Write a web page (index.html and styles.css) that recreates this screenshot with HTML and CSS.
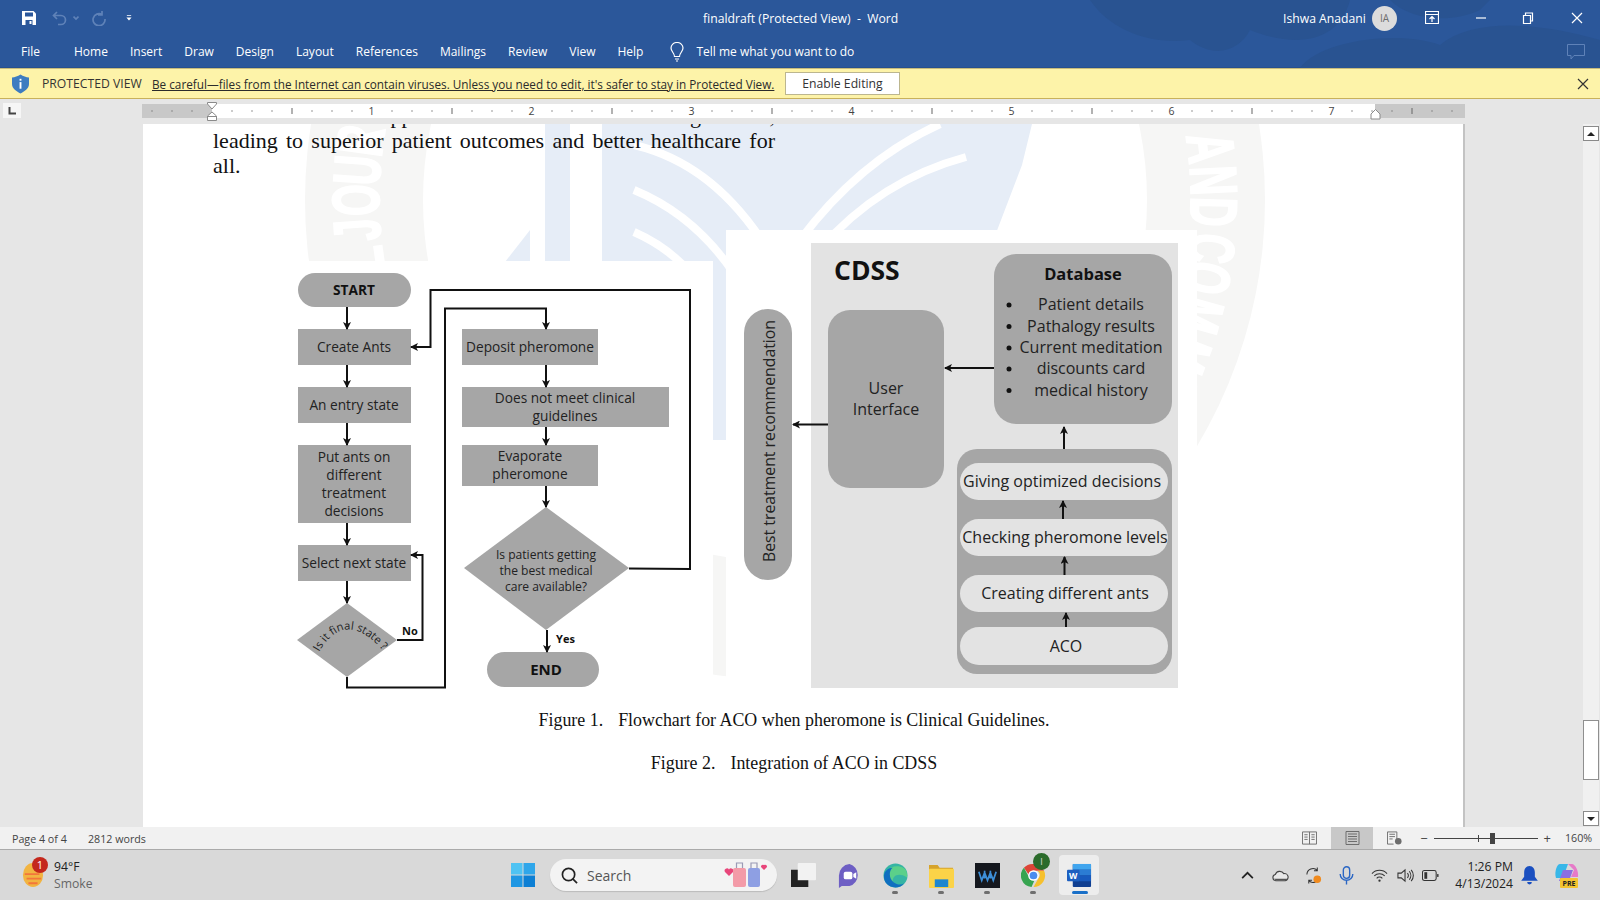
FILE: index.html
```html
<!DOCTYPE html>
<html lang="en">
<head>
<meta charset="utf-8">
<title>finaldraft (Protected View) - Word</title>
<link rel="stylesheet" href="styles.css">
</head>
<body>
<header class="ribbon">
  <svg class="ribbon-art" viewBox="0 0 1600 68" aria-hidden="true">
    <path d="M1090 0 C1110 30 1150 45 1190 40 C1215 60 1240 50 1250 30 C1300 50 1340 40 1350 0Z"/>
    <path d="M1300 68 C1320 40 1400 30 1440 45 C1470 20 1530 20 1600 40 V68Z"/>
    <path d="M1390 0 C1410 20 1450 24 1480 10 L1490 0Z"/>
  </svg>
  <div class="titlebar">
    <div class="qat">
      <svg class="ic14" viewBox="0 0 14 14"><path class="fw" d="M0 0H11.5L14 2.5V14H0Z"/><path class="fb" d="M3 1.5H11V5.5H3Z"/><path class="fb" d="M3.5 9H10.5V14H3.5Z"/><path class="fw" d="M7.5 10H9.5V13H7.5Z"/></svg>
      <svg class="ic16 undo" viewBox="0 0 16 16"><path class="sdim" d="M5 2 L1.5 5.5 L5 9 M2 5.5 H9 A4.5 4.5 0 0 1 9 14.5 H6"/></svg>
      <svg class="ic6 undo-more" viewBox="0 0 6 4"><path class="sdim" d="M0.5 0.5 L3 3 L5.5 0.5"/></svg>
      <svg class="ic16 redo" viewBox="0 0 16 16"><path class="sdim" d="M11 1 V5 H7 M11 4.5 A6 6 0 1 0 14 9"/></svg>
      <svg class="ic6 custom" viewBox="0 0 6 7"><path class="fw" d="M0.5 0H5.5V1H0.5Z M0 3H6L3 6.5Z"/></svg>
    </div>
    <div class="doc-title">finaldraft (Protected View)&nbsp; -&nbsp; Word</div>
    <div class="win-tools">
      <span class="user">Ishwa Anadani</span>
      <span class="avatar">IA</span>
      <svg class="ic14 tool-display" viewBox="0 0 14 14"><path class="sw" d="M0.5 0.5H13.5V12.5H0.5Z M0.5 3.5H13.5 M7 11V5.5 M4.5 8 L7 5.5 L9.5 8"/></svg>
      <svg class="ic12 tool-min" viewBox="0 0 12 12"><path class="sw" d="M1 6H11"/></svg>
      <svg class="ic12 tool-restore" viewBox="0 0 12 12"><path class="sw" d="M1.5 3.5H8.5V11.5H1.5Z M3.5 3.5V1H10.5V9H8.5"/></svg>
      <svg class="ic12 tool-close" viewBox="0 0 12 12"><path class="sw" d="M1 1L11 11M11 1L1 11"/></svg>
    </div>
  </div>
  <nav class="tabs">
    <span class="tab tab-file">File</span>
    <span class="tab">Home</span><span class="tab">Insert</span><span class="tab">Draw</span><span class="tab">Design</span><span class="tab">Layout</span><span class="tab">References</span><span class="tab">Mailings</span><span class="tab">Review</span><span class="tab">View</span><span class="tab">Help</span>
    <svg class="bulb" viewBox="0 0 14 20"><path class="sw" d="M4.5 14.5 C4.5 11 1 9.5 1 6 A6 5.5 0 0 1 13 6 C13 9.5 9.500 11 9.500 14.500Z M5 17H9 M6 19H8"/></svg>
    <span class="tell">Tell me what you want to do</span>
    <svg class="comment" viewBox="0 0 18 16"><path class="sdim2" d="M0.500 0.500H17.500V11.500H7L4 15V11.500H0.500Z"/></svg>
  </nav>
</header>

<section class="protected">
  <svg class="shield" viewBox="0 0 18 20"><path class="shield-b" d="M9 0 C12 2 15 3 18 3 V10 C18 15 13 18 9 20 C5 18 0 15 0 10 V3 C3 3 6 2 9 0Z"/><rect class="fw" x="8" y="8" width="2" height="7"/><rect class="fw" x="8" y="4.500" width="2" height="2"/></svg>
  <strong class="prot-label">PROTECTED VIEW</strong>
  <a class="prot-link">Be careful—files from the Internet can contain viruses. Unless you need to edit, it's safer to stay in Protected View.</a>
  <button class="enable">Enable Editing</button>
  <svg class="ic12 prot-close" viewBox="0 0 12 12"><path class="sd" d="M1 1L11 11M11 1L1 11"/></svg>
</section>

<section class="ruler-row">
  <div class="tabstop"><svg viewBox="0 0 8 8" class="ic8"><path class="sd2" d="M1.500 0V6.500H8"/></svg></div>
  <svg class="ruler" viewBox="142 0 1323 26">
    <rect class="r-grey" x="142" y="5" width="1323" height="14"/>
    <rect class="r-white" x="212" y="5" width="1163" height="14"/>
    <line class="r-dots" x1="51.500" y1="12" x2="1465" y2="12"/>
    <line class="r-half" x1="131.500" y1="12" x2="1465" y2="12"/>
    <g class="r-num">
      <text x="371.500" y="16">1</text><text x="531.500" y="16">2</text><text x="691.500" y="16">3</text><text x="851.500" y="16">4</text><text x="1011.500" y="16">5</text><text x="1171.500" y="16">6</text><text x="1331.500" y="16">7</text>
    </g>
    <path class="r-mark" d="M207.500 3.500H216.500V5L212 10L207.500 5Z M212 13L216.500 17V21.500H207.500V17Z M207.500 17.500H216.500"/>
    <path class="r-mark" d="M1375.500 10.500L1380 15V20H1371V15Z"/>
  </svg>
</section>

<main class="workspace">
  <div class="gutter"></div>
  <article class="page">
    <svg class="watermark" viewBox="143 124 1321 704" aria-hidden="true">
      <circle class="wm-ring" cx="785" cy="200" r="480"/>
      <circle class="wm-inner" cx="785" cy="200" r="362"/>
      <rect class="wm-blue" x="545" y="124" width="25" height="180"/>
      <path class="wm-blue" d="M602 124H1032L1022 165L985 262L800 262V440H602Z"/>
      <path class="wm-blue" d="M530 230L505 262H530Z"/>
      <path class="wm-cut" d="M634 145Q720 165 775 262"/>
      <path class="wm-cut" d="M634 190Q695 215 735 275"/>
      <path class="wm-cut" d="M634 232Q675 250 700 285"/>
      <path class="wm-cut" d="M966 157Q880 180 819 250"/>
      <path class="wm-cut" d="M940 124Q860 160 800 240"/>
      <g class="wm-letters">
        <text transform="rotate(83 785 200) translate(785 -206) scale(.62 1)">A</text>
        <text transform="rotate(87.400 785 200) translate(785 -206) scale(.62 1)">N</text>
        <text transform="rotate(91.600 785 200) translate(785 -206) scale(.62 1)">D</text>
        <text transform="rotate(96.500 785 200) translate(785 -206) scale(.62 1)">C</text>
        <text transform="rotate(100.500 785 200) translate(785 -206) scale(.62 1)">O</text>
        <text transform="rotate(105.500 785 200) translate(785 -206) scale(.62 1)">M</text>
        <text transform="rotate(111 785 200) translate(785 -206) scale(.62 1)">M</text>
        <text transform="rotate(116 785 200) translate(785 -206) scale(.62 1)">U</text>
        <text transform="rotate(-98 785 200) translate(785 -206) scale(.62 1)">L</text>
        <text transform="rotate(-94 785 200) translate(785 -206) scale(.62 1)">J</text>
        <text transform="rotate(-90 785 200) translate(785 -206) scale(.62 1)">O</text>
        <text transform="rotate(-86 785 200) translate(785 -206) scale(.62 1)">U</text>
        <text transform="rotate(-82 785 200) translate(785 -206) scale(.62 1)">R</text>
      </g>
    </svg>

    <div class="body-text">
      <p class="cut-line">The ACO CDSS approach aids all clinical thinking results,</p>
      <p class="para">leading to superior patient outcomes and better healthcare for all.</p>
    </div>

    <svg class="figures" viewBox="143 186 1321 514" role="img" aria-label="Flowchart and CDSS diagram">
      <defs>
        <marker id="head" viewBox="0 0 8 8" refX="7" refY="4" markerWidth="4" markerHeight="4" orient="auto-start-reverse"><path class="arrowhead" d="M0 0L8 4L0 8L2 4Z"/></marker>
        <path id="final-arc" d="M319 652 Q346 606 386 654"/>
      </defs>
      <rect class="blank" x="143" y="261" width="570" height="439"/>
      <rect class="blank" x="726" y="230" width="471" height="465"/>

      <!-- flowchart -->
      <rect class="node" x="298" y="273" width="113" height="34" rx="17"/>
      <rect class="node" x="298" y="329" width="113" height="36"/>
      <rect class="node" x="298" y="387" width="113" height="36"/>
      <rect class="node" x="298" y="445" width="113" height="78"/>
      <rect class="node" x="298" y="545" width="113" height="36"/>
      <polygon class="node" points="347,603 397,640 347,677 297,640"/>
      <rect class="node" x="462" y="329" width="136" height="36"/>
      <rect class="node" x="462" y="387" width="207" height="40"/>
      <rect class="node" x="462" y="445" width="136" height="41"/>
      <polygon class="node" points="546,507 629,568 546,630 464,568"/>
      <rect class="node" x="487" y="652" width="112" height="35" rx="17.500"/>

      <g class="wire">
        <path d="M347 307V329"/><path d="M347 365V387"/><path d="M347 423V445"/><path d="M347 523V545"/><path d="M347 581V603"/>
        <path d="M546 365V387"/><path d="M546 427V445"/><path d="M546 486V507"/><path d="M547 630V652"/>
        <path d="M629 568.500L690 569V290H430.500V347H411"/>
        <path d="M347 677V687.500H445V308.500H546V329"/>
        <path d="M397 640H422.500V555H411"/>
      </g>

      <g class="ft">
        <text class="b" x="354" y="295">START</text>
        <text x="354" y="352">Create Ants</text>
        <text x="354" y="410">An entry state</text>
        <text x="354" y="461.500">Put ants on</text>
        <text x="354" y="479.500">different</text>
        <text x="354" y="498">treatment</text>
        <text x="354" y="516">decisions</text>
        <text x="354" y="568">Select next state</text>
        <text x="530" y="352">Deposit pheromone</text>
        <text x="565" y="403">Does not meet clinical</text>
        <text x="565" y="421">guidelines</text>
        <text x="530" y="461">Evaporate</text>
        <text x="530" y="479">pheromone</text>
        <text class="sm" x="546" y="559">Is patients getting</text>
        <text class="sm" x="546" y="575">the best medical</text>
        <text class="sm" x="546" y="591">care available?</text>
        <text class="b end" x="546" y="675">END</text>
        <text class="b tiny" x="410" y="635">No</text>
        <text class="b tiny" x="565.500" y="643">Yes</text>
        <text class="arc"><textPath href="#final-arc">Is it final state ?</textPath></text>
      </g>

      <!-- CDSS -->
      <rect class="panel" x="811" y="243" width="367" height="445"/>
      <rect class="node" x="744" y="309" width="48" height="271" rx="24"/>
      <rect class="node" x="828" y="310" width="116" height="178" rx="22"/>
      <rect class="node" x="994" y="254" width="178" height="170" rx="22"/>
      <rect class="node" x="957" y="449" width="215" height="225" rx="20"/>
      <rect class="panel" x="960" y="463" width="208" height="37" rx="18.500"/>
      <rect class="panel" x="960" y="519" width="208" height="37" rx="18.500"/>
      <rect class="panel" x="960" y="575" width="208" height="37" rx="18.500"/>
      <rect class="panel" x="960" y="627" width="208" height="38" rx="19"/>
      <g class="wire">
        <path d="M994 368H945"/><path d="M828 424.500H793"/><path d="M1064 449V427"/>
        <path d="M1063 519V501"/><path d="M1064.500 575V557"/><path d="M1066 627V613"/>
      </g>
      <g class="ft">
        <text class="cdss" x="834" y="280">CDSS</text>
        <text class="b dbt" x="1083" y="280">Database</text>
        <text class="rot" transform="translate(774.500 441) rotate(-90)">Best treatment recommendation</text>
        <text class="md" x="886" y="393.500">User</text>
        <text class="md" x="886" y="415">Interface</text>
        <circle class="dot" cx="1009" cy="305" r="2.500"/><circle class="dot" cx="1009" cy="326.500" r="2.500"/><circle class="dot" cx="1009" cy="348" r="2.500"/><circle class="dot" cx="1009" cy="369" r="2.500"/><circle class="dot" cx="1009" cy="390.500" r="2.500"/>
        <text class="md" x="1091" y="310">Patient details</text>
        <text class="md" x="1091" y="331.500">Pathalogy results</text>
        <text class="md" x="1091" y="353">Current meditation</text>
        <text class="md" x="1091" y="374">discounts card</text>
        <text class="md" x="1091" y="395.500">medical history</text>
        <text class="md" x="1062" y="487">Giving optimized decisions</text>
        <text class="md" x="1065" y="543">Checking pheromone levels</text>
        <text class="md" x="1065" y="599">Creating different ants</text>
        <text class="md" x="1066" y="652">ACO</text>
      </g>
    </svg>

    <p class="caption cap-one"><span class="cap-label">Figure 1.</span>Flowchart for ACO when pheromone is Clinical Guidelines.</p>
    <p class="caption cap-two"><span class="cap-label">Figure 2.</span>Integration of ACO in CDSS</p>
  </article>
  <div class="gutter-right"></div>
  <aside class="scrollbar">
    <div class="sb-btn"><svg class="ic8" viewBox="0 0 8 8"><path class="fd" d="M4 2L8 6H0Z"/></svg></div>
    <div class="sb-thumb"></div>
    <div class="sb-btn"><svg class="ic8" viewBox="0 0 8 8"><path class="fd" d="M4 6L8 2H0Z"/></svg></div>
  </aside>
</main>

<footer class="status">
  <span class="st-page">Page 4 of 4</span>
  <span class="st-words">2812 words</span>
  <div class="st-right">
    <svg class="st-ic read" viewBox="0 0 16 14"><path class="sg" d="M.5 .5H15.500V13.500H.5Z M8 .5V13.500 M2.500 3.500H6 M2.500 6H6 M2.500 8.500H6 M10 3.500H13.500 M10 6H13.500 M10 8.500H13.500"/></svg>
    <div class="st-active"><svg class="st-ic" viewBox="0 0 14 14"><path class="sg" d="M.5 .5H13.500V13.500H.5Z M2.500 3H11.500 M2.500 5.500H11.500 M2.500 8H11.500 M2.500 10.500H11.500"/></svg></div>
    <svg class="st-ic web" viewBox="0 0 16 14"><path class="sg" d="M.5 .5H10.500V9 M.5 .5V13.500H7 M2.500 3H8.500 M2.500 5.500H8.500 M2.500 8H6"/><circle class="web-dot" cx="12" cy="10.500" r="3.500"/></svg>
    <span class="z-minus">−</span>
    <div class="slider"><span class="slider-mid"></span><span class="slider-thumb"></span></div>
    <span class="z-plus">+</span>
    <span class="z-val">160%</span>
  </div>
</footer>

<div class="taskbar">
  <div class="weather">
    <svg class="wx-ic" viewBox="0 0 24 30"><ellipse class="wx-sun" cx="12" cy="15" rx="11" ry="13"/><path class="wx-line" d="M3 14H19 M5 19H21 M7 24H17"/></svg>
    <span class="wx-badge">1</span>
    <div class="wx-text"><span class="wx-temp">94°F</span><span class="wx-cond">Smoke</span></div>
  </div>
  <svg class="start" viewBox="0 0 24 24"><rect class="w1" width="11.500" height="11.500"/><rect class="w2" x="12.500" width="11.500" height="11.500"/><rect class="w3" y="12.500" width="11.500" height="11.500"/><rect class="w4" x="12.500" y="12.500" width="11.500" height="11.500"/></svg>
  <div class="search">
    <svg class="search-ic" viewBox="0 0 18 18"><circle class="sq" cx="8" cy="8" r="6.500"/><path class="sq" d="M12.500 12.500L17 17"/></svg>
    <span class="search-text">Search</span>
    <svg class="bags" viewBox="0 0 44 28"><path class="heart" d="M5 15 L1 11 A2.300 2.300 0 0 1 5 8.500 A2.300 2.300 0 0 1 9 11Z"/><rect class="bag1" x="9" y="7" width="13" height="19" rx="2"/><rect class="bag2" x="24" y="7" width="12" height="19" rx="2"/><path class="bag-h" d="M12.500 7V2H18.500V7 M27 7V2H33V7"/><path class="heart" d="M40 9 L37 6 A2 2 0 0 1 40 4 A2 2 0 0 1 43 6Z"/></svg>
  </div>
  <div class="app app-first">
    <svg class="app-ic" viewBox="0 0 26 26"><rect class="tv-back" x="7" y="0" width="19" height="18" rx="1"/><path class="tv-front" d="M0 7H7V18H18V25H0Z"/></svg>
  </div>
  <div class="app">
    <svg class="app-ic" viewBox="0 0 26 26"><path class="teams" d="M13 1A12 12 0 0 1 13 24H5L2 26V13A12 12 0 0 1 13 1Z"/><rect class="fw" x="7" y="9" width="9" height="8" rx="2"/><path class="fw" d="M17 11.500L20 9.500V16.500L17 14.500Z"/></svg>
  </div>
  <div class="app has-dot">
    <svg class="app-ic" viewBox="0 0 26 26"><circle class="edge-a" cx="13" cy="13" r="12.500"/><path class="edge-b" d="M25 12C25 6 20 3.500 14 3.500C7 3.500 3 9 3 14C3 20 8 24 13 24C10 21 9 17 12 14C14 12 19 11 25 15Z"/><path class="edge-c" d="M1 14C1 8 6 5 10 5C6 8 6 16 11 20C15 23 19 23 22 21C19 25 14 26 10 25C5 24 1 20 1 14Z"/></svg>
    <span class="run-dot"></span>
  </div>
  <div class="app has-dot">
    <svg class="app-ic" viewBox="0 0 26 26"><path class="fo-tab" d="M0 2H9L11 5H25V12H0Z"/><rect class="fo-body" y="6" width="26" height="20" rx="1"/><rect class="fo-blue" x="6" y="17" width="14" height="8"/></svg>
    <span class="run-dot"></span>
  </div>
  <div class="app has-dot">
    <svg class="app-ic" viewBox="0 0 26 26"><rect class="wave-bg" width="26" height="26"/><path class="wave" d="M4 9L7 18L10 10L13 18L16 10L19 18L22 9 M10 8V16 M16 8V16"/></svg>
    <span class="run-dot"></span>
  </div>
  <div class="app has-dot">
    <svg class="app-ic" viewBox="0 0 26 26"><path class="cr-r" d="M13 1A12 12 0 0 1 24 8H13A5 5 0 0 0 8 12L3 5A12 12 0 0 1 13 1Z"/><path class="cr-y" d="M24 8A12 12 0 0 1 13 25L18 16A5 5 0 0 0 17 8Z"/><path class="cr-g" d="M3 5L8 14A5 5 0 0 0 14 18L11 25A12 12 0 0 1 3 5Z"/><circle class="fw" cx="13" cy="13" r="5.500"/><circle class="cr-b" cx="13" cy="13" r="4"/></svg>
    <span class="cr-badge">I</span>
    <span class="run-dot"></span>
  </div>
  <div class="app">
    <div class="word-btn">
      <svg class="app-ic" viewBox="0 0 26 26"><rect class="wd4" x="6" y="1" width="19" height="24" rx="1"/><rect class="wd3" x="6" y="1" width="19" height="6"/><rect class="wd2" x="6" y="7" width="19" height="6"/><rect class="wd1" x="6" y="13" width="19" height="6"/><rect class="wd0" x="0" y="7" width="13" height="12" rx="1"/><text class="wd-w" x="6.500" y="16.500">W</text></svg>
      <span class="run-bar"></span>
    </div>
  </div>
  <div class="tray">
    <span class="tr"><svg class="tr-ic" viewBox="0 0 14 14"><path class="sk" d="M2 9.500L7 4.500L12 9.500"/></svg></span>
    <span class="tr"><svg class="tr-ic" viewBox="0 0 18 14"><path class="cloud" d="M4 12.500A3.300 3.300 0 0 1 3.500 6A5 5 0 0 1 12.500 5A3.800 3.800 0 0 1 14 12.500Z"/><path class="cloud-fill" d="M2 10.500H16V12H4Z"/></svg></span>
    <span class="tr"><svg class="tr-ic tr-lg" viewBox="0 0 18 18"><path class="sk1" d="M2 8A6.500 6.500 0 0 1 13 3.500M13 .5V4H9.500 M15 10 A6.500 6.500 0 0 1 4 14.500 M4 17.500V14H7.500"/><circle class="sync-dot" cx="13" cy="13" r="4"/></svg></span>
    <span class="tr"><svg class="tr-ic tr-lg" viewBox="0 0 14 18"><rect class="mic" x="4" y=".7" width="6" height="11" rx="3"/><path class="mic" d="M1 7.500A6 6 0 0 0 13 7.500M7 13.500V17.500"/></svg></span>
    <span class="tr"><svg class="tr-ic" viewBox="0 0 18 14"><path class="sk1" d="M1 5A11 11 0 0 1 17 5M3.500 7.500A7.500 7.500 0 0 1 14.500 7.500M6 10A4 4 0 0 1 12 10"/><circle class="fk" cx="9" cy="12.500" r="1.200"/></svg></span>
    <span class="tr tr-vol"><svg class="tr-ic" viewBox="0 0 18 14"><path class="sk1" d="M1 4.500H4.500L8.500 1V13L4.500 9.500H1Z M11 4.500A3.500 3.500 0 0 1 11 9.500M13 2.500A7 7 0 0 1 13 11.500M15 1A9 9 0 0 1 15 13"/></svg></span>
    <span class="tr tr-bat"><svg class="tr-ic" viewBox="0 0 18 12"><rect class="sk1" x=".5" y=".7" width="14.500" height="10.500" rx="2"/><rect class="fk" x="2.500" y="2.500" width="3" height="7"/><rect class="fk" x="16" y="4.500" width="1.500" height="3"/></svg></span>
    <div class="clock"><span>1:26 PM</span><span>4/13/2024</span></div>
    <span class="tr tr-bell"><svg class="tr-ic tr-lg" viewBox="0 0 14 16"><path class="bell" d="M7 0C10 0 11.500 2.500 11.500 5.500V9L14 12.500H0L2.500 9V5.500C2.500 2.500 4 0 7 0Z M5 13.500H9A2 2 0 0 1 5 13.500Z"/></svg></span>
    <span class="tr tr-cop"><svg class="cop-ic" viewBox="0 0 26 26"><path class="cop-a" d="M6 2H14L9 16H2C0 10 3 2 6 2Z"/><path class="cop-b" d="M14 2H18C21 2 25 9 24 15H17L20 8Z"/><path class="cop-c" d="M9 8H19L15 19H5Z"/><rect class="cop-d" x="6" y="16" width="18" height="10" rx="1"/><text class="cop-t" x="15" y="24">PRE</text></svg></span>
  </div>
</div>
</body>
</html>
```
FILE: styles.css
```css
* { box-sizing: border-box; }
html, body { margin: 0; height: 100%; }
body {
  width: 1600px; height: 900px; overflow: hidden;
  display: flex; flex-direction: column;
  font-family: "Open Sans", "Liberation Sans", sans-serif;
  background: #e6e6e6; color: #222;
}
svg { display: block; flex: none; }
p { margin: 0; }

.ic6 { width: 6px; height: 6px; }
.ic8 { width: 8px; height: 8px; }
.ic12 { width: 12px; height: 12px; }
.ic14 { width: 14px; height: 14px; }
.ic16 { width: 16px; height: 16px; }
.fw { fill: #fff; }
.fb { fill: #2b579a; }
.fd { fill: #222; }
.sw { fill: none; stroke: #fff; stroke-width: 1.2; }
.sd { fill: none; stroke: #333; stroke-width: 1.2; }
.sd2 { fill: none; stroke: #444; stroke-width: 2; }
.sdim { fill: none; stroke: #5f82b8; stroke-width: 1.7; }
.sdim2 { fill: none; stroke: #5f82b8; stroke-width: 1; }

/* ribbon */
.ribbon { position: relative; height: 68px; flex: none; background: #2b579a; color: #fff; border-bottom: 1px solid #27508e; }
.ribbon-art { position: absolute; inset: 0; width: 1600px; height: 68px; fill: #295391; }
.titlebar { position: relative; height: 35px; display: flex; align-items: center; padding-top: 1px; }
.qat { display: flex; align-items: center; padding-left: 22px; width: 703px; }
.undo { margin-left: 16px; }
.undo-more { margin-left: 5px; }
.redo { margin-left: 12px; }
.custom { margin-left: 19px; }
.doc-title { font-size: 12.2px; white-space: nowrap; width: 580px; }
.win-tools { display: flex; align-items: center; }
.user { font-size: 12.2px; width: 90px; white-space: nowrap; }
.avatar { width: 25px; height: 25px; margin-left: -1px; border-radius: 50%; background: #dcdcdc; color: #6e6e6e; font-size: 10px; display: flex; align-items: center; justify-content: center; }
.tool-display { margin-left: 28px; }
.tool-min { margin-left: 36px; }
.tool-restore { margin-left: 35px; }
.tool-close { margin-left: 37px; }
.tabs { position: relative; height: 32px; display: flex; align-items: center; font-size: 12px; padding-left: 21px; padding-top: 1px; }
.tab { margin-right: 22px; white-space: nowrap; }
.tab-file { margin-right: 34px; }
.bulb { width: 14px; height: 20px; margin-left: 5px; }
.tell { margin-left: 12px; white-space: nowrap; }
.comment { width: 18px; height: 16px; margin-left: auto; margin-right: 15px; }

/* protected */
.protected { height: 31px; flex: none; display: flex; align-items: center; background: #fdf3a9; border-bottom: 1px solid #c8b15c; border-top: 1px solid #c8bb7c; font-size: 12.2px; padding-left: 12px; color: #333; }
.shield { width: 17px; height: 20px; }
.shield-b { fill: #3d7cc0; }
.prot-label { font-weight: 400; margin-left: 13px; width: 110px; white-space: nowrap; }
.prot-link { text-decoration: underline; width: 633px; white-space: nowrap; color: #2b2b2b; font-size: 11.75px; }
.enable { width: 115px; height: 23px; background: #fff; border: 1px solid #bcb68f; font: inherit; color: #333; padding: 0; }
.prot-close { margin-left: auto; margin-right: 11px; }

/* ruler */
.ruler-row { height: 25px; flex: none; display: flex; background: #e6e6e6; }
.tabstop { width: 18px; height: 15px; margin: 4px 0 0 3px; background: #f6f6f6; display: flex; align-items: center; justify-content: center; }
.ruler { width: 1323px; height: 26px; margin-left: 121px; }
.r-grey { fill: #c8c8c8; }
.r-white { fill: #fff; }
.r-dots { stroke: #777; stroke-width: 1.5; stroke-dasharray: 1 19 1 19 1 39; stroke-dashoffset: -20; }
.r-half { stroke: #666; stroke-width: 6; stroke-dasharray: 1 159; }
.r-num { font-size: 10.5px; fill: #444; text-anchor: middle; }
.r-mark { fill: #fff; stroke: #8a8a8a; stroke-width: 1; }

/* workspace */
.workspace { flex: 1; min-height: 0; display: flex; }
.gutter { width: 143px; flex: none; }
.page { position: relative; width: 1322px; flex: none; background: #fff; border-right: 2px solid #c3c3c3; overflow: hidden; font-family: "Liberation Serif", serif; color: #111; }
.gutter-right { width: 118px; flex: none; }
.scrollbar { width: 16px; flex: none; background: #f0f0f0; display: flex; flex-direction: column; padding-top: 2px; margin-bottom: 1px; }
.sb-btn { height: 15px; background: #fff; border: 1px solid #8a8a8a; display: flex; align-items: center; justify-content: center; flex: none; }
.sb-thumb { height: 61px; margin-top: 579px; margin-bottom: 31px; background: #fff; border: 1px solid #8f8f8f; }

.watermark { position: absolute; left: 0; top: 0; width: 1321px; height: 704px; }
.wm-ring { fill: #f6f6f5; }
.wm-inner { fill: #fff; }
.wm-blue { fill: #e6edf7; }
.wm-cut { fill: none; stroke: #fff; stroke-width: 8; }
.wm-letters { font-family: "Liberation Sans", sans-serif; font-weight: 700; font-size: 66px; fill: #fff; stroke: #fff; stroke-width: 2; text-anchor: middle; }

.body-text { position: relative; width: 562px; margin: -20.700px 0 0 70px; font-size: 22px; line-height: 25px; }
.cut-line { text-align: justify; text-align-last: justify; }
.para { text-align: justify; }
.figures { position: relative; width: 1321px; height: 514px; margin-top: 7.700px; }
.blank { fill: #fff; }
.panel { fill: #e3e3e3; }
.node { fill: #a6a6a6; }
.wire { fill: none; stroke: #111; stroke-width: 2; }
.wire path { marker-end: url(#head); }
.arrowhead { fill: #111; stroke: none; }
.ft { font-family: "Open Sans", sans-serif; font-size: 13.700px; fill: #222; text-anchor: middle; }
.ft .b { font-weight: 700; fill: #111; }
.ft .sm { font-size: 12.100px; }
.ft .end { font-size: 15px; }
.ft .tiny { font-size: 11px; }
.ft .arc { font-size: 11.200px; text-anchor: start; }
.ft .cdss { font-size: 26.500px; font-weight: 700; text-anchor: start; fill: #111; }
.ft .dbt { font-size: 16.500px; }
.ft .rot { font-size: 15.800px; }
.ft .md { font-size: 16px; }
.dot { fill: #111; }
.caption { position: relative; font-size: 17.900px; line-height: 24px; text-align: center; padding-right: 18px; }
.cap-one { margin-top: 8px; }
.cap-two { margin-top: 19px; }
.cap-label { margin-right: 15px; }

/* status */
.status { height: 23px; flex: none; display: flex; align-items: center; background: #f1f1f1; border-bottom: 1px solid #aaa; font-size: 10.700px; color: #444; }
.st-page { margin-left: 12px; width: 76px; padding-top: 2px; }
.st-words { padding-top: 2px; }
.st-right { margin-left: auto; display: flex; align-items: center; height: 100%; }
.st-ic { width: 15px; height: 14px; }
.sg { fill: none; stroke: #6d6d6d; stroke-width: 1; }
.web-dot { fill: #6d6d6d; }
.st-active { width: 42px; height: 100%; margin: 0 14px; background: #c8c8c8; display: flex; align-items: center; justify-content: center; }
.z-minus { margin-left: 18px; font-size: 13px; }
.slider { position: relative; width: 104px; height: 1px; background: #444; margin-left: 6px; }
.slider-mid { position: absolute; left: 44px; top: -3px; width: 1px; height: 7px; background: #444; }
.slider-thumb { position: absolute; left: 56px; top: -5px; width: 5px; height: 11px; background: #444; }
.z-plus { margin-left: 6px; font-size: 13px; }
.z-val { margin: 0 9px 0 14px; width: 26px; }

/* taskbar */
.taskbar { height: 50px; flex: none; display: flex; align-items: center; background: #d9d9d9; }
.weather { position: relative; width: 511px; height: 100%; flex: none; display: flex; align-items: center; padding-left: 22px; }
.wx-ic { width: 22px; height: 28px; }
.wx-sun { fill: #f2b441; }
.wx-line { fill: none; stroke: #f3763b; stroke-width: 2; }
.wx-badge { position: absolute; left: 32px; top: 7px; width: 16px; height: 16px; border-radius: 50%; background: #c4281c; color: #fff; font-size: 11px; line-height: 16px; text-align: center; }
.wx-text { display: flex; flex-direction: column; margin-left: 10px; font-size: 12.200px; line-height: 17px; }
.wx-temp { color: #222; }
.wx-cond { color: #666; }
.start { width: 24px; height: 24px; }
.w1 { fill: #4fc3f3; } .w2 { fill: #2fa6ea; } .w3 { fill: #1f97e3; } .w4 { fill: #0d7fd4; }
.search { width: 227px; height: 32px; margin-left: 15px; flex: none; border-radius: 16px; background: #f3f3f3; box-shadow: 0 1px 1px #bbb; display: flex; align-items: center; padding-left: 11px; position: relative; }
.search-ic { width: 17px; height: 17px; }
.sq { fill: none; stroke: #222; stroke-width: 1.800; }
.search-text { margin-left: 9px; font-size: 14px; color: #555; }
.bags { width: 44px; height: 28px; margin-left: auto; margin-right: 9px; }
.heart { fill: #e8457a; }
.bag1 { fill: #f39ba8; }
.bag2 { fill: #8e9fe3; }
.bag-h { fill: none; stroke: #9a9ab5; stroke-width: 1.200; }
.app { position: relative; width: 46px; height: 100%; flex: none; display: flex; align-items: center; justify-content: center; }
.app-first { margin-left: 3px; }
.app-ic { width: 25px; height: 25px; }
.tv-back { fill: #f2f2f2; }
.tv-front { fill: #222; }
.teams { fill: #6e5fc4; }
.edge-a { fill: #36b5a4; }
.edge-b { fill: #5bd08a; }
.edge-c { fill: #0f6fc0; }
.fo-tab { fill: #d6a32c; }
.fo-body { fill: #fbd348; }
.fo-blue { fill: #1e86d0; }
.wave-bg { fill: #15181e; }
.wave { fill: none; stroke: #3d8fd8; stroke-width: 1.800; }
.cr-r { fill: #dd4537; }
.cr-y { fill: #f6c02d; }
.cr-g { fill: #37a450; }
.cr-b { fill: #4a8cf0; }
.cr-badge { position: absolute; left: 23px; top: 3px; width: 17px; height: 17px; border-radius: 50%; background: #2b6b2b; color: #ddd; font-size: 9px; line-height: 17px; text-align: center; }
.run-dot { position: absolute; left: 20px; bottom: 6px; width: 6px; height: 3px; border-radius: 2px; background: #6f6f6f; }
.word-btn { position: relative; width: 40px; height: 40px; background: #ededed; border-radius: 4px; display: flex; align-items: center; justify-content: center; }
.run-bar { position: absolute; left: 13px; bottom: 1px; width: 16px; height: 3px; border-radius: 2px; background: #1a70c8; }
.wd4 { fill: #103f91; } .wd3 { fill: #41a5ee; } .wd2 { fill: #2b7cd3; } .wd1 { fill: #185abd; } .wd0 { fill: #1d5fc0; }
.wd-w { fill: #fff; font-size: 9px; font-weight: 700; text-anchor: middle; }
.tray { display: flex; align-items: center; height: 100%; margin-left: 129px; flex: none; }
.tr { width: 33px; display: flex; align-items: center; justify-content: center; flex: none; }
.tr-vol { width: 19px; }
.tr-bat { width: 31px; }
.tr-bell { width: 32px; }
.tr-cop { width: 44px; }
.tr-ic { width: 17px; height: 15px; }
.tr-lg { height: 19px; }
.sk { fill: none; stroke: #222; stroke-width: 1.600; }
.sk1 { fill: none; stroke: #333; stroke-width: 1.100; }
.fk { fill: #333; }
.cloud { fill: #e8e8e8; stroke: #444; stroke-width: 1.200; }
.cloud-fill { fill: #555; }
.sync-dot { fill: #f08a1d; }
.mic { fill: none; stroke: #2a66c4; stroke-width: 1.300; }
.clock { width: 67px; display: flex; flex-direction: column; align-items: flex-end; font-size: 12.200px; line-height: 17px; color: #222; white-space: nowrap; }
.bell { fill: #1a4fc0; }
.cop-ic { width: 26px; height: 26px; }
.cop-a { fill: #38b7e8; }
.cop-b { fill: #e67ac8; }
.cop-c { fill: #8b6fe0; }
.cop-d { fill: #f4c430; }
.cop-t { font-size: 7px; font-weight: 700; fill: #222; text-anchor: middle; }
```
